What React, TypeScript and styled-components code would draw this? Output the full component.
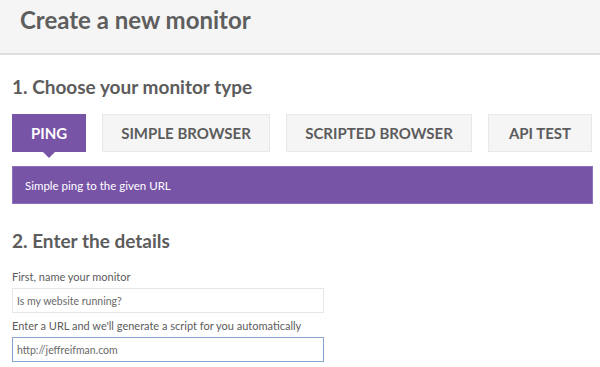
import React, { useState } from 'react';
import styled, { createGlobalStyle } from 'styled-components';

const GlobalStyle = createGlobalStyle`
  body {
    margin: 0;
    background: #ffffff;
    font-family: Lato, 'Open Sans', 'Liberation Sans', sans-serif;
    color: #5c5c5c;
  }
`;

const Header = styled.header`
  height: 53px;
  background: #f5f5f5;
  border-bottom: 2px solid #dedede;
  display: flex;
  align-items: center;
  padding-left: 20px;
  box-sizing: content-box;
`;

const Title = styled.h1`
  margin: -14px 0 0;
  font-size: 24px;
  font-weight: 700;
  color: #5e5e5e;
`;

const Content = styled.main`
  padding: 0 7px 0 12px;
`;

const SectionTitle = styled.h2<{ $top: number }>`
  margin: ${(p) => p.$top}px 0 0;
  font-size: 19px;
  font-weight: 700;
  line-height: 26px;
  color: #5c5c5c;
`;

const Tabs = styled.div`
  display: flex;
  gap: 16px;
  margin-top: 14px;
`;

const Tab = styled.button<{ $active?: boolean; $width: number }>`
  position: relative;
  width: ${(p) => p.$width}px;
  height: 38px;
  padding: 0;
  font-family: inherit;
  font-size: 15px;
  font-weight: 700;
  color: ${(p) => (p.$active ? '#ffffff' : '#5c5c5c')};
  background: ${(p) => (p.$active ? '#7854a7' : '#f5f5f5')};
  border: 1px solid ${(p) => (p.$active ? '#7854a7' : '#e8e8e8')};
  cursor: pointer;

  &::after {
    content: '';
    display: ${(p) => (p.$active ? 'block' : 'none')};
    position: absolute;
    left: 50%;
    bottom: -7px;
    margin-left: -6px;
    border-left: 6px solid transparent;
    border-right: 6px solid transparent;
    border-top: 6px solid #7854a7;
  }
`;

const Banner = styled.div`
  margin-top: 14px;
  height: 38px;
  display: flex;
  align-items: center;
  padding-left: 12px;
  background: #7854a7;
  border: 1px solid #8e6fba;
  box-sizing: border-box;
  color: #ffffff;
  font-size: 11.5px;
`;

const Field = styled.div<{ $top: number }>`
  margin-top: ${(p) => p.$top}px;
  display: flex;
  flex-direction: column;
  gap: 5px;
`;

const Label = styled.label`
  font-size: 11px;
  color: #5c5c5c;
  line-height: 13px;
`;

const Input = styled.input<{ $focused?: boolean }>`
  width: 312px;
  height: 25px;
  box-sizing: border-box;
  padding: 0 4px;
  font-family: inherit;
  font-size: 10.5px;
  color: #6a6a6a;
  caret-color: #333333;
  border: 1px solid ${(p) => (p.$focused ? '#87a3cf' : '#e6e6e6')};
  outline: none;
  background: #ffffff;

  &::placeholder {
    color: #6a6a6a;
  }
`;

const tabs = [
  { name: 'PING', width: 74 },
  { name: 'SIMPLE BROWSER', width: 168 },
  { name: 'SCRIPTED BROWSER', width: 186 },
  { name: 'API TEST', width: 104 },
];

const App: React.FC = () => {
  const [active, setActive] = useState('PING');
  const [name, setName] = useState('');
  const [url, setUrl] = useState('http://jeffreifman.com');

  return (
    <>
      <GlobalStyle />
      <Header>
        <Title>Create a new monitor</Title>
      </Header>
      <Content>
        <SectionTitle $top={19}>1. Choose your monitor type</SectionTitle>
        <Tabs>
          {tabs.map((tab) => (
            <Tab
              key={tab.name}
              $width={tab.width}
              $active={tab.name === active}
              onClick={() => setActive(tab.name)}
            >
              {tab.name}
            </Tab>
          ))}
        </Tabs>
        <Banner>Simple ping to the given URL</Banner>
        <SectionTitle $top={24}>2. Enter the details</SectionTitle>
        <Field $top={16}>
          <Label>First, name your monitor</Label>
          <Input
            placeholder="Is my website running?"
            value={name}
            onChange={(e) => setName(e.target.value)}
          />
        </Field>
        <Field $top={6}>
          <Label>Enter a URL and we'll generate a script for you automatically</Label>
          <Input
            $focused
            autoFocus
            value={url}
            onFocus={(e) => {
              const end = e.target.value.length;
              e.target.setSelectionRange(end, end);
            }}
            onChange={(e) => setUrl(e.target.value)}
          />
        </Field>
      </Content>
    </>
  );
};

export default App;
